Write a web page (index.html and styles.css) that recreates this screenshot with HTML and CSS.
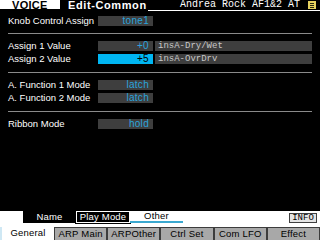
FILE: index.html
```html
<!DOCTYPE html>
<html>
<head>
<meta charset="utf-8">
<link rel="stylesheet" href="styles.css">
</head>
<body>
<div class="screen">
  <header class="top">
    <div class="mode">VOICE</div>
    <div class="title">Edit-Common</div>
    <div class="patch">
      <span class="patch-name">Andrea Rock AF1&amp;2 AT</span>
      <svg class="menu-icon" width="8" height="8" viewBox="0 0 8 8">
        <rect x="0" y="0" width="8" height="8" fill="#e6d260"/>
        <rect x="2" y="2" width="4" height="1" fill="#2a2a10"/>
        <rect x="2" y="4" width="4" height="1" fill="#2a2a10"/>
        <rect x="2" y="6" width="4" height="1" fill="#2a2a10"/>
      </svg>
    </div>
  </header>

  <main class="params">
    <div class="row first-row">
      <span class="label">Knob Control Assign</span>
      <span class="val">tone1</span>
    </div>
    <div class="sep first-sep"></div>
    <div class="group">
      <div class="row">
        <span class="label">Assign 1 Value</span>
        <span class="val">+0</span>
        <span class="dest">insA-Dry/Wet</span>
      </div>
      <div class="row">
        <span class="label">Assign 2 Value</span>
        <span class="val active">+5</span>
        <span class="dest">insA-OvrDrv</span>
      </div>
    </div>
    <div class="sep"></div>
    <div class="group">
      <div class="row">
        <span class="label">A. Function 1 Mode</span>
        <span class="val">latch</span>
      </div>
      <div class="row">
        <span class="label">A. Function 2 Mode</span>
        <span class="val">latch</span>
      </div>
    </div>
    <div class="sep"></div>
    <div class="row">
      <span class="label">Ribbon Mode</span>
      <span class="val">hold</span>
    </div>
  </main>

  <footer class="bottom">
    <div class="subtabs">
      <div class="subtab-name">Name</div>
      <div class="subtab-play">Play Mode</div>
      <div class="subtab-other">Other</div>
      <div class="spacer"></div>
      <div class="info">INFO</div>
    </div>
    <div class="tabs">
      <span class="tab selected">General</span>
      <span class="tab">ARP Main</span>
      <span class="tab">ARPOther</span>
      <span class="tab">Ctrl Set</span>
      <span class="tab">Com LFO</span>
      <span class="tab">Effect</span>
    </div>
  </footer>
</div>
</body>
</html>
```

FILE: styles.css
```css
* { box-sizing: border-box; }
html, body { margin: 0; padding: 0; background: #000; }
body { width: 320px; height: 240px; overflow: hidden; }

.screen {
  width: 320px;
  height: 240px;
  display: flex;
  flex-direction: column;
  background: #000;
  color: #fff;
  font-family: "Liberation Sans", Arial, sans-serif;
}

/* header */
.top {
  display: flex;
  height: 11px;
  flex: none;
}
.mode {
  width: 60px;
  height: 9px;
  background: #fff;
  color: #000;
  font-weight: bold;
  font-size: 11px;
  line-height: 10px;
  padding-left: 12px;
  letter-spacing: 0.3px;
}
.title {
  width: 88px;
  padding-left: 8px;
  font-weight: bold;
  font-size: 11px;
  line-height: 10px;
  letter-spacing: 0.6px;
  color: #fff;
}
.patch {
  flex: 1;
  display: flex;
  align-items: flex-start;
  justify-content: flex-end;
  border-bottom: 1px solid #fff;
  height: 11px;
}
.patch-name {
  font-family: "Liberation Mono", "DejaVu Sans Mono", monospace;
  font-size: 10px;
  line-height: 10px;
  margin-right: 8px;
  color: #fff;
}
.menu-icon {
  margin-top: 1px;
  margin-right: 4px;
  display: block;
}

/* parameter list */
.params {
  flex: 1;
  padding: 0 8px;
}
.group {
  display: flex;
  flex-direction: column;
  gap: 3px;
}
.row {
  display: flex;
  height: 10px;
  align-items: center;
}
.first-row { margin-top: 5px; }
.label {
  width: 90px;
  font-size: 9.5px;
  line-height: 10px;
  color: #fff;
  white-space: nowrap;
}
.val {
  width: 55px;
  height: 10px;
  background: #3e3e3e;
  color: #2aa4dc;
  text-align: right;
  padding-right: 4px;
  font-size: 10px;
  line-height: 10px;
  letter-spacing: 0.3px;
}
.val.active {
  background: #00b6f2;
  color: #000;
}
.dest {
  flex: 1;
  height: 10px;
  margin-left: 2px;
  background: #3e3e3e;
  color: #c8c8c8;
  padding-left: 3px;
  font-family: "Liberation Mono", "DejaVu Sans Mono", monospace;
  font-size: 9px;
  line-height: 10px;
}
.sep {
  height: 1px;
  background: #8a8a8a;
  margin: 8px 0 7px;
}
.first-sep { margin-top: 7px; }

/* footer */
.bottom {
  flex: none;
  height: 29px;
  background: #fff;
  display: flex;
  flex-direction: column;
}
.subtabs {
  display: flex;
  height: 12px;
  padding-left: 23px;
}
.subtab-name,
.subtab-play,
.subtab-other {
  width: 53px;
  height: 12px;
  font-size: 9.5px;
  text-align: center;
  letter-spacing: 0.2px;
}
.subtab-name {
  background: #000;
  color: #fff;
  line-height: 12px;
}
.subtab-play {
  width: 54px;
  background: #000;
  color: #fff;
  border: 1px solid #fff;
  box-shadow: 0 0 0 1px #000;
  line-height: 10px;
}
.subtab-other {
  color: #000;
  background: #fff;
  border-bottom: 2px solid #3aa8d0;
  line-height: 10px;
}
.spacer { flex: 1; }
.info {
  width: 28px;
  height: 10px;
  margin-top: 2px;
  margin-right: 3px;
  background: #e4e4e4;
  border: 1px solid #404040;
  color: #000;
  font-family: "Liberation Mono", "DejaVu Sans Mono", monospace;
  font-size: 9px;
  line-height: 8px;
  text-align: center;
}
.tabs {
  margin-top: 4px;
  display: grid;
  grid-template-columns: 54px repeat(5, 1fr);
  height: 13px;
}
.tab {
  background: #a8a8a8;
  border: 1px solid #3c3c3c;
  border-bottom: none;
  color: #000;
  font-size: 9.5px;
  line-height: 12px;
  text-align: center;
  letter-spacing: 0.2px;
  white-space: nowrap;
}
.tab.selected {
  background: #fff;
  border: none;
  border-left: 2px solid #cfe8f4;
}
```
